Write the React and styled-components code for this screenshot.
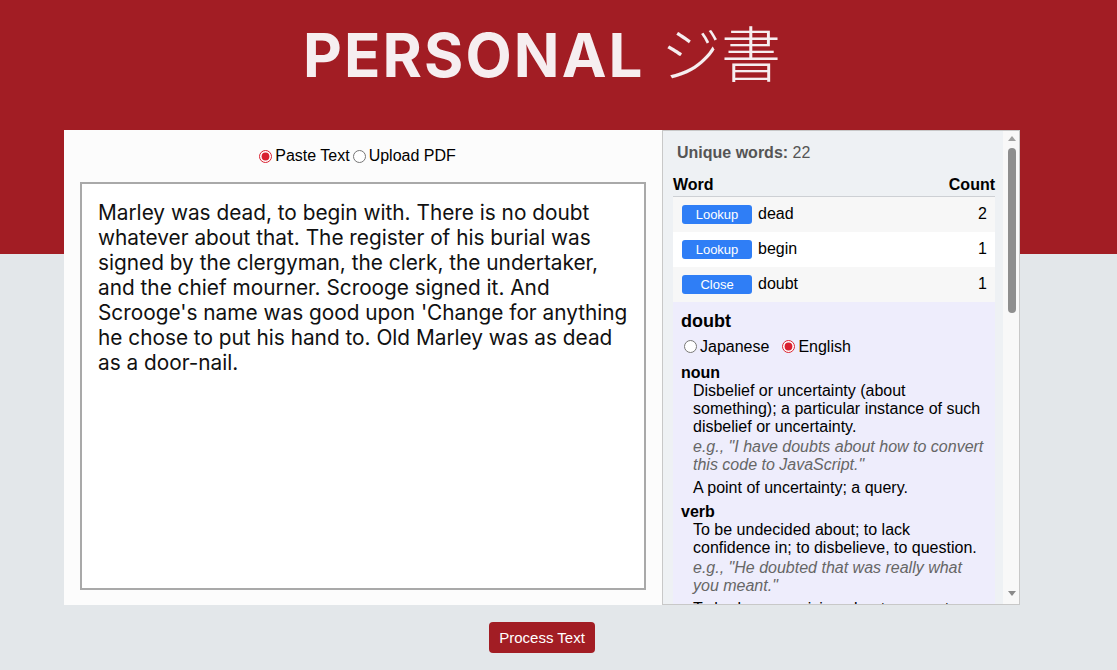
import React, { useState } from 'react';
import styled, { createGlobalStyle } from 'styled-components';

const GlobalStyle = createGlobalStyle`
    html, body {
        margin: 0;
        padding: 0;
    }

    body {
        font-family: 'Liberation Sans', Arial, sans-serif;
        color: #000;
    }
`;

const passage =
    "Marley was dead, to begin with. There is no doubt whatever about that. The register of his burial was signed by the clergyman, the clerk, the undertaker, and the chief mourner. Scrooge signed it. And Scrooge's name was good upon 'Change for anything he chose to put his hand to. Old Marley was as dead as a door-nail.";

const words = [
    { word: 'dead', count: 2 },
    { word: 'begin', count: 1 },
    { word: 'doubt', count: 1 },
    { word: 'whatever', count: 1 },
    { word: 'register', count: 1 },
    { word: 'burial', count: 1 },
    { word: 'sign', count: 2 },
    { word: 'clergyman', count: 1 },
    { word: 'clerk', count: 1 },
    { word: 'undertaker', count: 1 },
    { word: 'chief', count: 1 },
    { word: 'mourner', count: 1 },
    { word: 'name', count: 1 },
    { word: 'good', count: 1 },
    { word: 'change', count: 1 },
    { word: 'anything', count: 1 },
    { word: 'choose', count: 1 },
    { word: 'put', count: 1 },
    { word: 'hand', count: 1 },
    { word: 'old', count: 1 },
    { word: 'door-nail', count: 1 },
    { word: 'upon', count: 1 },
];

const doubtEntry = [
    {
        pos: 'noun',
        defs: [
            {
                text: 'Disbelief or uncertainty (about something); a particular instance of such disbelief or uncertainty.',
                example: '"I have doubts about how to convert this code to JavaScript."',
            },
            { text: 'A point of uncertainty; a query.' },
        ],
    },
    {
        pos: 'verb',
        defs: [
            {
                text: 'To be undecided about; to lack confidence in; to disbelieve, to question.',
                example: '"He doubted that was really what you meant."',
            },
            {
                text: 'To harbour suspicion about; suspect.',
                example: '"I doubt he will come tonight."',
            },
            { text: 'To fear; to be apprehensive of.' },
        ],
    },
];

const App = () => {
    const [mode, setMode] = useState('paste');
    const [open, setOpen] = useState('doubt');
    const [lang, setLang] = useState('en');

    return (
        <Page>
            <GlobalStyle />

            <Title>
                PERSONAL <Kana>ジ書</Kana>
            </Title>

            <Card>
                <InputPanel>
                    <ModeRow>
                        <label>
                            <Radio
                                type="radio"
                                name="mode"
                                checked={mode === 'paste'}
                                onChange={() => setMode('paste')}
                            />
                            Paste Text
                        </label>
                        <label>
                            <Radio
                                type="radio"
                                name="mode"
                                checked={mode === 'pdf'}
                                onChange={() => setMode('pdf')}
                            />
                            Upload PDF
                        </label>
                    </ModeRow>

                    <TextBox defaultValue={passage} spellCheck={false} />
                </InputPanel>

                <ResultPanel>
                    <ResultScroll>
                        <Summary>
                            <strong>Unique words:</strong> {words.length}
                        </Summary>

                        <WordTable>
                            <thead>
                                <tr>
                                    <HeadCell>Word</HeadCell>
                                    <HeadCell $right>Count</HeadCell>
                                </tr>
                            </thead>
                            <tbody>
                                {words.map(({ word, count }, i) => (
                                    <React.Fragment key={word}>
                                        <WordRow $odd={i % 2 === 0}>
                                            <td>
                                                <WordCell>
                                                    <LookupButton
                                                        onClick={() =>
                                                            setOpen(open === word ? null : word)
                                                        }
                                                    >
                                                        {open === word ? 'Close' : 'Lookup'}
                                                    </LookupButton>
                                                    {word}
                                                </WordCell>
                                            </td>
                                            <CountCell>{count}</CountCell>
                                        </WordRow>

                                        {open === word && (
                                            <tr>
                                                <DefinitionCell colSpan={2}>
                                                    <DefWord>{word}</DefWord>
                                                    <LangRow>
                                                        <LangLabel>
                                                            <Radio
                                                                type="radio"
                                                                name="lang"
                                                                checked={lang === 'ja'}
                                                                onChange={() => setLang('ja')}
                                                            />
                                                            Japanese
                                                        </LangLabel>
                                                        <LangLabel>
                                                            <Radio
                                                                type="radio"
                                                                name="lang"
                                                                checked={lang === 'en'}
                                                                onChange={() => setLang('en')}
                                                            />
                                                            English
                                                        </LangLabel>
                                                    </LangRow>

                                                    {doubtEntry.map(group => (
                                                        <PosGroup key={group.pos}>
                                                            <PosName>{group.pos}</PosName>
                                                            {group.defs.map(def => (
                                                                <Definition key={def.text}>
                                                                    {def.text}
                                                                    {def.example && (
                                                                        <Example>e.g., {def.example}</Example>
                                                                    )}
                                                                </Definition>
                                                            ))}
                                                        </PosGroup>
                                                    ))}
                                                </DefinitionCell>
                                            </tr>
                                        )}
                                    </React.Fragment>
                                ))}
                            </tbody>
                        </WordTable>
                    </ResultScroll>

                    <ScrollBar aria-hidden="true">
                        <ScrollArrow $dir="up" />
                        <ScrollThumb />
                        <ScrollArrow $dir="down" />
                    </ScrollBar>
                </ResultPanel>
            </Card>

            <Footer>
                <ProcessButton>Process Text</ProcessButton>
            </Footer>
        </Page>
    );
};

export default App;

const Page = styled.div`
    min-height: 100vh;
    padding: 15px 0 0 64px;
    box-sizing: border-box;
    background: linear-gradient(to bottom, #a21d24 0, #a21d24 254px, #e3e7ea 254px);
`;

const Title = styled.h1`
    width: 956px;
    height: 72px;
    margin: 0 0 43px;
    text-align: center;
    font-family: Inter, 'Noto Sans CJK JP', sans-serif;
    font-size: 60px;
    line-height: 72px;
    font-weight: 700;
    letter-spacing: 0.035em;
    color: #f6eef0;
`;

const Kana = styled.span`
    font-family: 'Noto Sans CJK JP', sans-serif;
    font-weight: 300;
    letter-spacing: 0;
`;

const Card = styled.main`
    display: flex;
    width: 956px;
    height: 475px;
`;

const InputPanel = styled.section`
    flex: 0 0 598px;
    display: flex;
    flex-direction: column;
    gap: 16px;
    padding: 16px 16px 15px;
    box-sizing: border-box;
    background: #fcfcfc;
`;

const ModeRow = styled.div`
    display: flex;
    justify-content: center;
    height: 20px;
    padding-right: 14px;
    font-size: 16px;
    line-height: 20px;

    label {
        display: flex;
        align-items: center;
    }
`;

const Radio = styled.input`
    margin: 0 3px;
    width: 13px;
    height: 13px;
    accent-color: #d9202f;
`;

const TextBox = styled.textarea`
    flex: 1;
    resize: none;
    padding: 16px;
    border: 2px solid #a9a9a9;
    background: #fff;
    font-family: Inter, sans-serif;
    font-size: 20.8px;
    line-height: 25px;
    color: #111;
    outline: none;
`;

const ResultPanel = styled.aside`
    flex: 1;
    display: flex;
    min-width: 0;
    border: 1px solid #c8c8c8;
    background: #eef1f4;
    font-size: 16px;
`;

const ResultScroll = styled.div`
    flex: 1;
    padding: 12px 8px 0 10px;
    overflow: hidden;
`;

const ScrollBar = styled.div`
    flex: 0 0 16px;
    display: flex;
    flex-direction: column;
    background: #f8f8f8;
`;

const ScrollArrow = styled.div`
    display: flex;
    justify-content: center;
    align-items: ${({ $dir }) => ($dir === 'up' ? 'flex-start' : 'flex-end')};
    height: 17px;
    margin-top: ${({ $dir }) => ($dir === 'down' ? 'auto' : '0')};
    padding: 5px 0 0 1px;
    box-sizing: border-box;

    &::before {
        content: '';
        border-left: 4.5px solid transparent;
        border-right: 4.5px solid transparent;
        ${({ $dir }) =>
            $dir === 'up' ? 'border-bottom: 5px solid #a0a0a0;' : 'border-top: 5px solid #8a8a8a;'}
        margin-bottom: ${({ $dir }) => ($dir === 'down' ? '8px' : '0')};
    }
`;

const ScrollThumb = styled.div`
    width: 8px;
    height: 165px;
    margin-left: 5px;
    border-radius: 4px;
    background: #8e8e8e;
`;

const Summary = styled.p`
    margin: 0 0 10px 4px;
    line-height: 20px;
    color: #555;
`;

const WordTable = styled.table`
    width: 322px;
    border-collapse: collapse;
`;

const HeadCell = styled.th`
    padding: 3px 0 2px;
    line-height: 18px;
    text-align: ${({ $right }) => ($right ? 'right' : 'left')};
    border-bottom: 1px solid #cdd0d4;
`;

const WordRow = styled.tr`
    height: 35px;
    background: ${({ $odd }) => ($odd ? '#f7f7f7' : '#ffffff')};
`;

const WordCell = styled.div`
    display: flex;
    align-items: center;
    gap: 6px;
    padding: 0 8px;
    white-space: nowrap;
`;

const CountCell = styled.td`
    padding: 0 8px;
    text-align: right;
`;

const LookupButton = styled.button`
    width: 70px;
    height: 19px;
    padding: 0;
    border: none;
    border-radius: 3px;
    background: #2f7ef6;
    color: #fff;
    font-family: 'Liberation Sans', Arial, sans-serif;
    font-size: 13px;
    cursor: pointer;
`;

const DefinitionCell = styled.td`
    padding: 8px 8px 10px;
    background: #eeedfc;
`;

const DefWord = styled.h3`
    margin: 0;
    font-size: 18px;
    line-height: 22px;
`;

const LangRow = styled.div`
    display: flex;
    margin-top: 4px;
    line-height: 22px;
`;

const LangLabel = styled.label`
    display: flex;
    align-items: center;
    margin-right: 10px;
`;

const PosGroup = styled.div`
    margin-top: 6px;
`;

const PosName = styled.div`
    font-weight: 700;
    line-height: 18px;
`;

const Definition = styled.div`
    margin: 0 0 5px 12px;
    line-height: 18px;
`;

const Example = styled.div`
    margin-top: 2px;
    font-style: italic;
    color: #666;
`;

const Footer = styled.footer`
    display: flex;
    justify-content: center;
    width: 956px;
    padding-top: 17px;
`;

const ProcessButton = styled.button`
    height: 31px;
    padding: 0 10px;
    border: none;
    border-radius: 4px;
    background: #a21d24;
    color: #fff;
    font-family: 'Liberation Sans', Arial, sans-serif;
    font-size: 15px;
    cursor: pointer;
`;
